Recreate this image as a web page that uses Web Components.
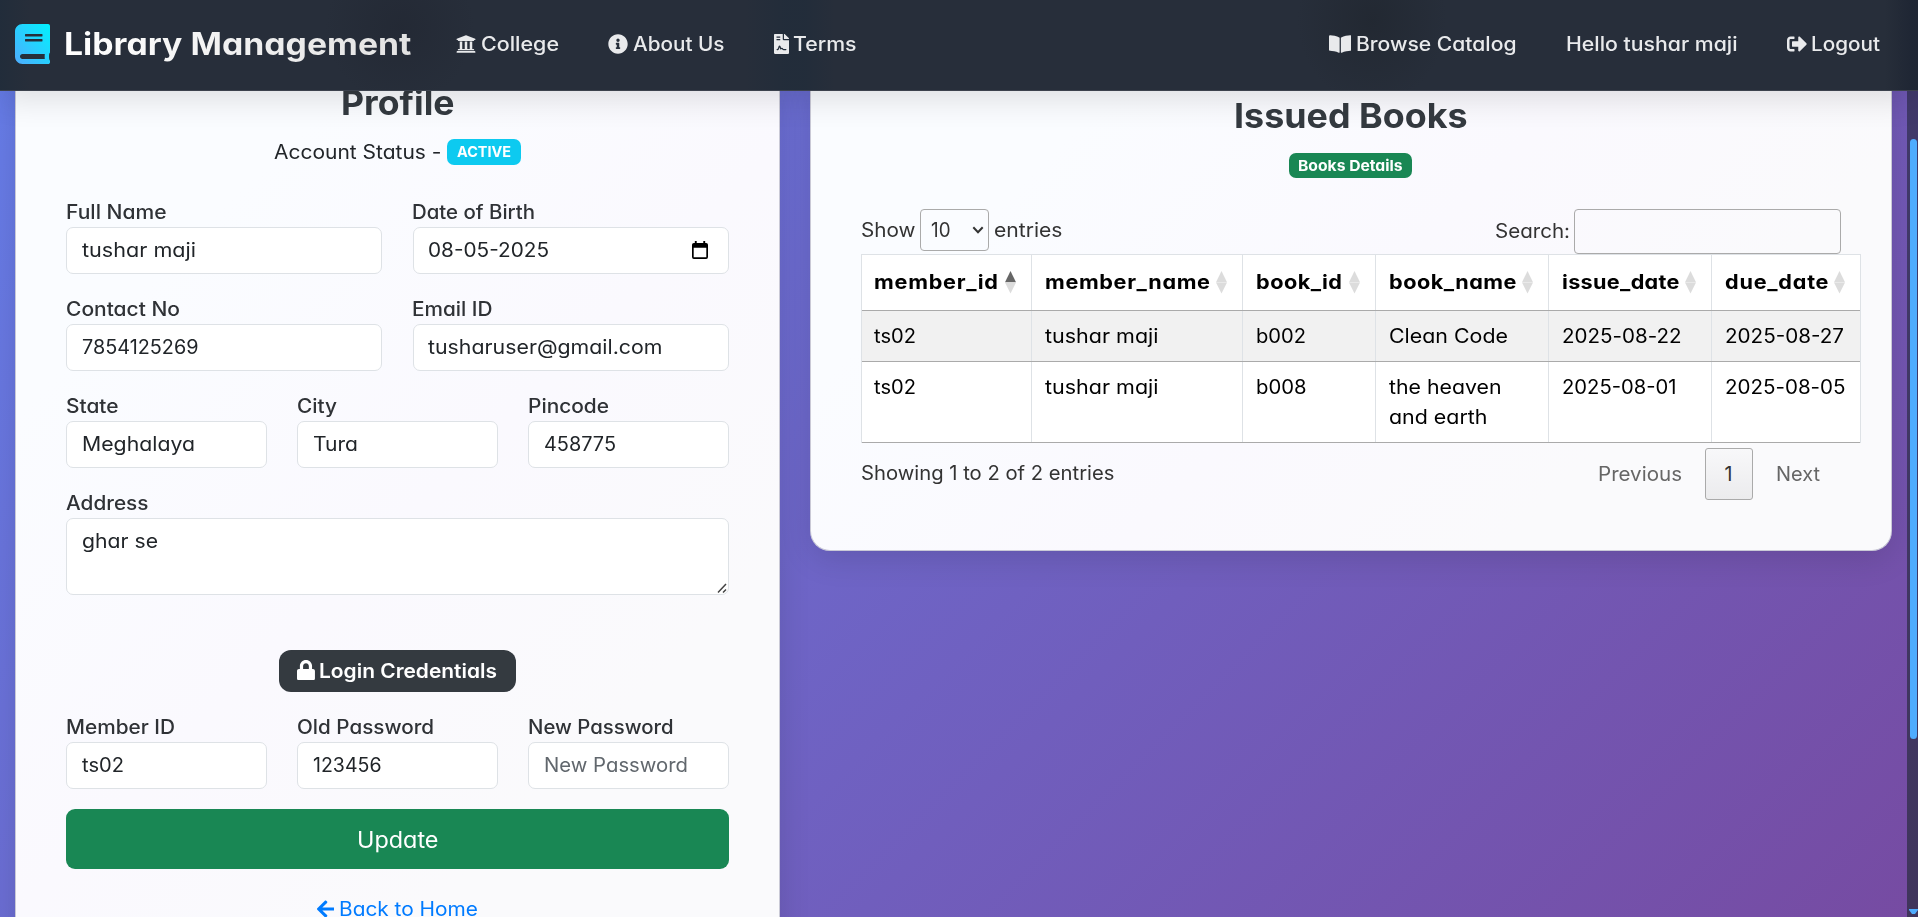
<!DOCTYPE html>
<html lang="en">
<head>
<meta charset="utf-8">
<title>Library Management</title>
<style>
html,body{margin:0;height:100%;overflow:hidden}
body{font:400 19.5px/30px Inter,"Open Sans",sans-serif;color:#212529;font-feature-settings:"cv11"}
</style>
</head>
<body>
<library-page></library-page>
<script>
const define = (name, html, setup) => {
  const tpl = document.createElement('template');
  tpl.innerHTML = html;
  customElements.define(name, class extends HTMLElement {
    connectedCallback() {
      if (this.shadowRoot) return;
      this.attachShadow({mode: 'open'}).append(tpl.content.cloneNode(true));
      if (setup) setup(this, this.shadowRoot);
    }
  });
};

const ICONS = {
  book: [448, 'M448 360V24c0-13.3-10.7-24-24-24H96C43 0 0 43 0 96v320c0 53 43 96 96 96h328c13.3 0 24-10.7 24-24v-16c0-7.5-3.5-14.3-8.9-18.7-4.2-15.4-4.2-59.3 0-74.7 5.4-4.3 8.9-11.1 8.9-18.6zM128 134c0-3.3 2.7-6 6-6h212c3.3 0 6 2.7 6 6v20c0 3.3-2.7 6-6 6H134c-3.3 0-6-2.7-6-6v-20zm0 64c0-3.3 2.7-6 6-6h212c3.3 0 6 2.7 6 6v20c0 3.3-2.7 6-6 6H134c-3.3 0-6-2.7-6-6v-20zm253.4 250H96c-17.7 0-32-14.3-32-32 0-17.6 14.4-32 32-32h285.4c-1.9 17.1-1.9 46.9 0 64z'],
  college: [512, 'M496 128v16a8 8 0 0 1-8 8h-24v12c0 6.627-5.373 12-12 12H60c-6.627 0-12-5.373-12-12v-12H24a8 8 0 0 1-8-8v-16a8 8 0 0 1 4.941-7.392l232-88a7.996 7.996 0 0 1 6.118 0l232 88A8 8 0 0 1 496 128zm-24 304H40c-13.255 0-24 10.745-24 24v16a8 8 0 0 0 8 8h464a8 8 0 0 0 8-8v-16c0-13.255-10.745-24-24-24zM96 192v192H60c-6.627 0-12 5.373-12 12v20h416v-20c0-6.627-5.373-12-12-12h-36V192h-64v192h-64V192h-64v192h-64V192H96z'],
  info: [512, 'M256 8C119.043 8 8 119.083 8 256c0 136.997 111.043 248 248 248s248-111.003 248-248C504 119.083 392.957 8 256 8zm0 110c23.196 0 42 18.804 42 42s-18.804 42-42 42-42-18.804-42-42 18.804-42 42-42zm56 254c0 6.627-5.373 12-12 12h-88c-6.627 0-12-5.373-12-12v-24c0-6.627 5.373-12 12-12h12v-64h-12c-6.627 0-12-5.373-12-12v-24c0-6.627 5.373-12 12-12h64c6.627 0 12 5.373 12 12v100h12c6.627 0 12 5.373 12 12v24z'],
  contract: [384, 'M377 105L279.1 7c-4.5-4.5-10.6-7-17-7H256v128h128v-6.1c0-6.3-2.5-12.4-7-16.9zM224 136V0H24C10.7 0 0 10.7 0 24v464c0 13.3 10.7 24 24 24h336c13.3 0 24-10.7 24-24V160H248c-13.2 0-24-10.8-24-24zM64 72c0-4.4 3.6-8 8-8h80c4.4 0 8 3.6 8 8v16c0 4.4-3.6 8-8 8H72c-4.4 0-8-3.6-8-8V72zm0 64c0-4.4 3.6-8 8-8h80c4.4 0 8 3.6 8 8v16c0 4.4-3.6 8-8 8H72c-4.4 0-8-3.6-8-8v-16zM80 416c-21 0-21-32 0-32 11 0 16-3 19-12l19-58c8-24 41-24 49 0l15 45c20-10 44-3 54 16 4 8 8 9 16 9h52c21 0 21 32 0 32h-52c-19 0-36-10-44-26-5-10-14-8-20 1-6 12-24 11-29-1l-16-50-15 44c-7 20-25 32-48 32z'],
  open: [576, 'M542.22 32.05c-54.8 3.11-163.72 14.43-230.96 55.59-4.64 2.84-7.27 7.89-7.27 13.17v363.87c0 11.55 12.63 18.85 23.28 13.49 69.18-34.82 169.23-44.32 218.7-46.92 16.89-.89 30.02-14.43 30.02-30.66V62.75c.01-17.71-15.35-31.74-33.77-30.7zM264.73 87.64C197.5 46.48 88.58 35.17 33.78 32.05 15.36 31.01 0 45.04 0 62.75V400.6c0 16.24 13.13 29.78 30.02 30.66 49.49 2.6 149.59 12.11 218.77 46.95 10.62 5.35 23.21-1.94 23.21-13.46V100.63c0-5.29-2.62-10.14-7.27-12.99z'],
  logout: [512, 'M497 273L329 441c-15 15-41 4.5-41-17v-96H152c-13.3 0-24-10.7-24-24v-96c0-13.3 10.7-24 24-24h136V88c0-21.4 25.9-32 41-17l168 168c9.3 9.4 9.3 24.6 0 34zM192 436v-40c0-6.6-5.4-12-12-12H96c-17.7 0-32-14.3-32-32V160c0-17.7 14.3-32 32-32h84c6.6 0 12-5.4 12-12V76c0-6.6-5.4-12-12-12H96c-53 0-96 43-96 96v192c0 53 43 96 96 96h84c6.6 0 12-5.4 12-12z'],
  lock: [448, 'M400 224h-24v-72C376 68.2 307.8 0 224 0S72 68.2 72 152v72H48c-26.5 0-48 21.5-48 48v192c0 26.5 21.5 48 48 48h352c26.5 0 48-21.5 48-48V272c0-26.5-21.5-48-48-48zm-104 0H152v-72c0-39.7 32.3-72 72-72s72 32.3 72 72v72z'],
  back: [448, 'M257.5 445.1l-22.2 22.2c-9.4 9.4-24.6 9.4-33.9 0L7 273c-9.4-9.4-9.4-24.6 0-33.9L201.4 44.7c9.4-9.4 24.6-9.4 33.9 0l22.2 22.2c9.5 9.5 9.3 25-.4 34.3L136.6 216H424c13.3 0 24 10.7 24 24v32c0 13.3-10.7 24-24 24H136.6l120.5 114.8c9.8 9.3 10 24.8.4 34.3z']
};

/* Solid glyph; size gives the height in pixels. */
define('solid-icon', `<style>:host{display:block;flex:none}svg{display:block;fill:currentColor}</style>`, (el, root) => {
  const [w, d] = ICONS[el.getAttribute('name')];
  const s = +el.getAttribute('size') || 20;
  const grad = el.getAttribute('name') === 'book';
  root.innerHTML += `<svg width="${w / 512 * s}" height="${s}" viewBox="0 0 ${w} 512">${grad ? '<defs><linearGradient id="g" x1="0" y1="1" x2="1" y2="0"><stop stop-color="#4facfe"/><stop offset="1" stop-color="#00f2fe"/></linearGradient></defs>' : ''}<path ${grad ? 'fill="url(#g)"' : ''} d="${d}"/></svg>`;
});

/* A single line of text that fills the width in w: letters are widened first, then tracked. */
define('fit-text', `<style>:host{display:inline-block;white-space:nowrap;flex:none}span{display:inline-block;margin-left:.1px;transform-origin:0 50%}:host([shine]) span{background:linear-gradient(90deg,#fff,#e2e2e2);-webkit-background-clip:text;background-clip:text;color:transparent}</style><span><slot></slot></span>`, (el, root) => {
  const w = +el.getAttribute('w'), s = root.querySelector('span');
  const n = el.textContent.length, target = w - .5;
  el.style.width = w + 'px';
  if (n < 2) return;
  const natural = s.getBoundingClientRect().width;
  const k = Math.max(.94, Math.min(1.11, target / natural));
  s.style.letterSpacing = (target / k - natural) / (n - 1) + 'px';
  s.style.transform = `scaleX(${k})`;
});

define('nav-item', `<style>:host{display:flex;align-items:center;gap:4.5px;color:#e9eaec;font-weight:500;height:30px}</style><slot></slot>`);

define('top-nav', `<style>
:host{display:flex;align-items:center;box-sizing:border-box;height:91px;padding:0 37.500px 3px 15px;position:relative;z-index:2;border-bottom:1px solid #3c424d;box-shadow:0 8px 32px rgba(0,0,0,.12);
background:linear-gradient(90deg,rgba(32,44,58,.8),transparent 30px),linear-gradient(90deg,transparent 745px,rgba(32,44,58,.65) 785px,rgba(32,44,58,.65) 805px,transparent 835px),linear-gradient(90deg,transparent 1885px,rgba(30,37,51,.9) 1912px),radial-gradient(ellipse 75px 75px at 400px 28px,rgba(33,38,49,.6),transparent),radial-gradient(ellipse 75px 85px at 1372px 20px,rgba(33,39,48,.8),transparent),#272e3a}
.brand{display:flex;align-items:center;gap:14px;width:441px;color:#fff}
.brand fit-text{font-weight:700;font-size:31px;line-height:40px}
.group{display:flex;gap:49px}
.right{margin-left:auto}
</style>
<div class="brand"><solid-icon name="book" size="40"></solid-icon><fit-text shine w="348">Library Management</fit-text></div>
<div class="group">
<nav-item><solid-icon name="college"></solid-icon><fit-text w="78.5">College</fit-text></nav-item>
<nav-item><solid-icon name="info"></solid-icon><fit-text w="92">About Us</fit-text></nav-item>
<nav-item><solid-icon name="contract"></solid-icon><fit-text w="64">Terms</fit-text></nav-item>
</div>
<div class="group right">
<nav-item><solid-icon name="open"></solid-icon><fit-text w="161">Browse Catalog</fit-text></nav-item>
<nav-item><fit-text w="172">Hello tushar maji</fit-text></nav-item>
<nav-item><solid-icon name="logout"></solid-icon><fit-text w="69.5">Logout</fit-text></nav-item>
</div>`);

define('glass-card', `<style>:host{display:block;box-sizing:border-box;border:1px solid #c9c9d6;border-top:0;border-radius:0 0 20px 20px;box-shadow:0 8px 32px rgba(0,0,0,.12);background:linear-gradient(135deg,#fafcff 20%,#faf9fe 50%,#fafafc 75%)}</style><slot></slot>`);

define('form-field', `<style>
:host{display:block}
.label{display:block;font-weight:500;color:#2f3236;height:30px;line-height:30px}
.label ::slotted(*){margin-left:-.4px}
.box{display:flex;justify-content:space-between;align-items:flex-start;box-sizing:border-box;height:47px;border:1px solid #dee2e6;border-radius:7px;background:#fff;padding:7.500px 19.500px 0 14.200px}
:host([area]) .box{height:77px;padding-right:1px}
:host([hint]) .box{color:#61676d}
.cal{margin-top:6px}.grip{align-self:flex-end;margin-bottom:1px}
svg{display:block}
</style><span class="label"><slot name="label"></slot></span><div class="box"><slot></slot></div>`, (el, root) => {
  const box = root.querySelector('.box');
  if (el.hasAttribute('date')) box.insertAdjacentHTML('beforeend', '<svg class="cal" width="16" height="18" viewBox="0 0 17 19"><path fill="#000" fill-rule="evenodd" d="M3 0h2v2h7V0h2v2h1a2 2 0 0 1 2 2v13a2 2 0 0 1-2 2H2a2 2 0 0 1-2-2V4a2 2 0 0 1 2-2h1zM1.800 7v10.200h13.400V7z"/></svg>');
  if (el.hasAttribute('area')) box.insertAdjacentHTML('beforeend', '<svg class="grip" width="10" height="10" viewBox="0 0 10 10"><path d="M1 9.500L9 1M6 9.500L9 6.500" stroke="#444" stroke-width="1.500" fill="none"/></svg>');
});

define('profile-panel', `<style>
:host{display:block;padding:1.600px 50.300px 0}
.title{display:flex;justify-content:center;height:42px;line-height:42px;font-size:34px;font-weight:700;color:#343a40}
.status{display:flex;align-items:center;justify-content:center;gap:5.500px;height:30px;margin:13px 0 30.400px}
.pill{display:flex;justify-content:center;align-items:center;box-sizing:border-box;width:74px;height:26px;border-radius:7px;background:#0dcaf0;color:#fff;font-weight:700;font-size:14.800px;line-height:26px;padding-top:1px}
.row{display:grid;gap:30.500px;margin-bottom:20px}
.two{grid-template-columns:1fr 1fr}.three{grid-template-columns:1fr 1fr 1fr}
.login{display:flex;align-items:center;justify-content:center;gap:4px;width:237px;height:42px;margin:55px auto 20px;border-radius:12px;background:#343a40;color:#fff;font-weight:600}
.login solid-icon{margin-top:-2px}
.update{display:flex;justify-content:center;height:60px;line-height:61px;border-radius:9px;background:#198754;color:#fff;font-size:22.500px}
.back{display:flex;justify-content:center;align-items:center;gap:4.500px;margin-top:25px;color:#007bff}
</style>
<div class="title"><fit-text w="114">Profile</fit-text></div>
<div class="status"><fit-text w="168">Account Status -</fit-text><span class="pill"><fit-text w="54.5">ACTIVE</fit-text></span></div>
<div class="row two">
<form-field><fit-text slot="label" w="101">Full Name</fit-text><fit-text w="114.5">tushar maji</fit-text></form-field>
<form-field date><fit-text slot="label" w="123.500">Date of Birth</fit-text><fit-text w="121.500">08-05-2025</fit-text></form-field>
</div>
<div class="row two">
<form-field><fit-text slot="label" w="114.500">Contact No</fit-text><fit-text w="117">7854125269</fit-text></form-field>
<form-field><fit-text slot="label" w="81">Email ID</fit-text><fit-text w="235">tusharuser@gmail.com</fit-text></form-field>
</div>
<div class="row three">
<form-field><fit-text slot="label" w="53">State</fit-text><fit-text w="113.5">Meghalaya</fit-text></form-field>
<form-field><fit-text slot="label" w="40.5">City</fit-text><fit-text w="45.5">Tura</fit-text></form-field>
<form-field><fit-text slot="label" w="81.500">Pincode</fit-text><fit-text w="72.500">458775</fit-text></form-field>
</div>
<form-field area><fit-text slot="label" w="83">Address</fit-text><fit-text w="76.5">ghar se</fit-text></form-field>
<div class="login"><solid-icon name="lock" size="20.5"></solid-icon><fit-text w="178.500">Login Credentials</fit-text></div>
<div class="row three">
<form-field><fit-text slot="label" w="109.500">Member ID</fit-text><fit-text w="42.5">ts02</fit-text></form-field>
<form-field><fit-text slot="label" w="137.500">Old Password</fit-text><fit-text w="69">123456</fit-text></form-field>
<form-field hint><fit-text slot="label" w="146">New Password</fit-text><fit-text w="144.500">New Password</fit-text></form-field>
</div>
<div class="update"><fit-text w="82">Update</fit-text></div>
<div class="back"><solid-icon name="back"></solid-icon><fit-text w="139.500">Back to Home</fit-text></div>`);

define('sort-mark', `<style>:host{display:block}svg{display:block}.u{fill:#dcdcdc}:host([asc]) .u{fill:#666}</style><svg width="11" height="23" viewBox="0 0 11 23"><path class="u" d="M5.500 0L11 11.200H0z"/><path fill="#dcdcdc" d="M0 11.500h11L5.500 22.500z"/></svg>`);

define('data-grid', `<style>
:host{display:block;border:1px solid #dee2e6;border-bottom:0;background:#fff;color:#000;box-sizing:border-box;width:1000px}
.tr{display:grid;grid-template-columns:169px 211px 133px 173px 163px 1fr;box-sizing:border-box;border-bottom:1px solid #aaa}
.tr>*{box-sizing:border-box;border-left:1px solid #dee2e6;padding:10px 0 0 13.200px}
.tr>*:first-child{border-left:0;padding-left:12.800px}
.head{height:56px;font-weight:700}.tr.head>*{display:flex;justify-content:space-between;padding-top:12px;padding-right:15px}
.head sort-mark{margin-top:4px}
.odd{height:51px;background:#f1f1f1}.even{height:81px}
.tr fit-text{display:block}
</style>
<div class="tr head">
<div><fit-text w="124.500">member_id</fit-text><sort-mark asc></sort-mark></div>
<div><fit-text w="165.500">member_name</fit-text><sort-mark></sort-mark></div>
<div><fit-text w="86.500">book_id</fit-text><sort-mark></sort-mark></div>
<div><fit-text w="128">book_name</fit-text><sort-mark></sort-mark></div>
<div><fit-text w="118">issue_date</fit-text><sort-mark></sort-mark></div>
<div><fit-text w="104">due_date</fit-text><sort-mark></sort-mark></div>
</div>
<div class="tr odd"><div><fit-text w="42.500">ts02</fit-text></div><div><fit-text w="114">tushar maji</fit-text></div><div><fit-text w="50.500">b002</fit-text></div><div><fit-text w="119.500">Clean Code</fit-text></div><div><fit-text w="120">2025-08-22</fit-text></div><div><fit-text w="119.500">2025-08-27</fit-text></div></div>
<div class="tr even"><div><fit-text w="42.500">ts02</fit-text></div><div><fit-text w="114">tushar maji</fit-text></div><div><fit-text w="51">b008</fit-text></div><div><fit-text w="113">the heaven</fit-text><fit-text w="99">and earth</fit-text></div><div><fit-text w="115">2025-08-01</fit-text></div><div><fit-text w="121">2025-08-05</fit-text></div></div>`);

define('books-panel', `<style>
:host{display:flex;flex-direction:column;box-sizing:border-box;height:470px;padding:14.600px 31px 0 49.500px}
.title{display:flex;justify-content:center;height:42px;line-height:42px;font-size:34px;font-weight:700;color:#343a40;margin-right:19px}
.pill{display:flex;justify-content:center;width:123px;height:25px;line-height:26px;margin:16.400px 0 0 428px;border-radius:7px;background:#198754;color:#fff;font-weight:700;font-size:14.800px}
.tools{display:flex;height:45px;margin-top:31px;color:#333}
.select{display:flex;justify-content:space-between;align-items:center;box-sizing:border-box;width:69px;height:42px;border:1px solid #aaa;border-radius:4px;padding:0 4.500px 0 10px;margin:0 5px 0 4.500px}
.line{line-height:42px}
.search{display:flex;margin:0 19.500px 0 auto}
.search .line{line-height:44px}
.box{box-sizing:border-box;width:267px;height:45px;border:1px solid #aaa;border-radius:4px;margin-left:3px}
.foot{display:flex;justify-content:space-between;color:#333;line-height:30px}
.info{padding-top:15px}
.pager{display:flex;margin:5px 39.500px 0 0;line-height:52px;color:#666}
.cur{display:flex;justify-content:center;box-sizing:border-box;width:48px;height:52px;line-height:50px;border:1px solid #aaa;border-radius:3px;margin:0 23px;color:#333;background:linear-gradient(rgba(230,230,230,.1),rgba(0,0,0,.06))}
</style>
<div class="title"><fit-text w="234">Issued Books</fit-text></div>
<div class="pill"><fit-text w="105">Books Details</fit-text></div>
<div class="tools"><fit-text class="line" w="55">Show</fit-text><div class="select"><fit-text w="20">10</fit-text><svg width="12" height="8" viewBox="0 0 12 8"><path d="M1.300 1.300L6 6.200l4.700-4.900" fill="none" stroke="#333" stroke-width="2"/></svg></div><fit-text class="line" w="69">entries</fit-text>
<div class="search"><fit-text class="line" w="75.500">Search:</fit-text><div class="box"></div></div></div>
<data-grid></data-grid>
<div class="foot"><fit-text class="info" w="254">Showing 1 to 2 of 2 entries</fit-text>
<div class="pager"><fit-text w="84.500">Previous</fit-text><div class="cur"><fit-text w="9">1</fit-text></div><fit-text w="44.500">Next</fit-text></div></div>`);

define('scroll-rail', `<style>:host{display:flex;flex-direction:column;align-items:flex-end;box-sizing:border-box;width:11px;padding:59px 1px 0 0;background:linear-gradient(#40396a,#40355c)}.thumb{width:7px;height:600px;border-radius:4px;background:#4facfe}svg{display:block;margin:170px -1px 0 0}</style><div class="thumb"></div><svg width="9" height="6" viewBox="0 0 9 6"><path fill="#4facfe" d="M0 0h9v1L6 5H3L0 1z"/></svg>`);

define('library-page', `<style>
:host{display:flex;flex-direction:column;height:917px;overflow:hidden;background:linear-gradient(135deg,#667eea,#764ba2)}
.main{flex:1;min-height:0;display:flex;margin-top:-11px}
.cards{flex:1;display:grid;grid-template-columns:765px 1082px;gap:30px;align-items:start;padding-left:15px}
.tall{height:900px}
</style>
<top-nav></top-nav>
<div class="main"><div class="cards"><glass-card class="tall"><profile-panel></profile-panel></glass-card><glass-card><books-panel></books-panel></glass-card></div><scroll-rail></scroll-rail></div>`);
</script>
</body>
</html>
